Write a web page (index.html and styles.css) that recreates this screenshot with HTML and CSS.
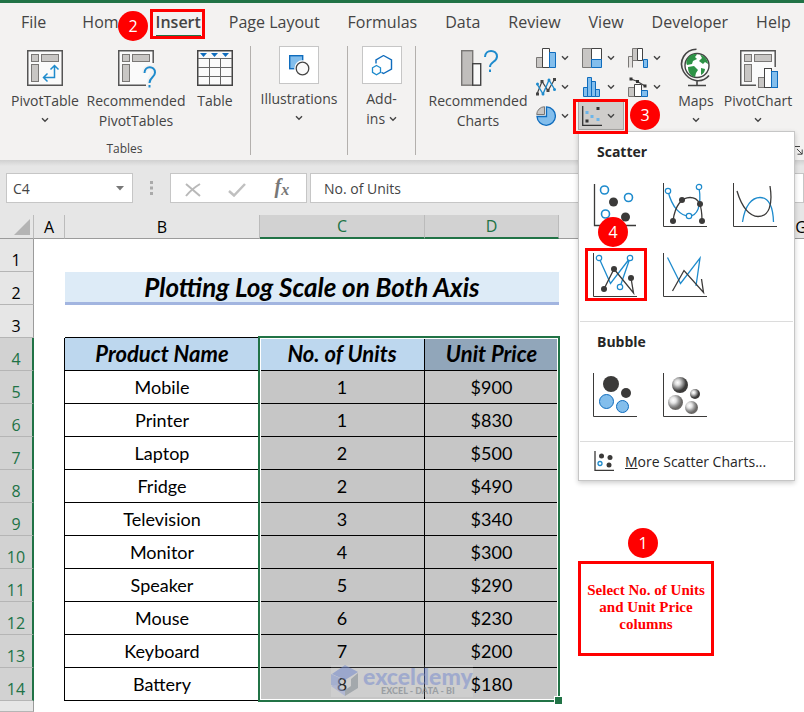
FILE: index.html
```html
<!DOCTYPE html>
<html lang="en">
<head>
    <meta charset="UTF-8">
    <title>Plotting Log Scale on Both Axis</title>
    <link rel="stylesheet" href="styles.css">
</head>
<body>
<svg class="defs" width="0" height="0">
    <symbol id="chevron" viewBox="0 0 8 6"><path d="M1 1.2 4 4.2 7 1.2" fill="none" stroke="#444" stroke-width="1.4"/></symbol>
    <symbol id="axis" viewBox="0 0 44 44"><path d="M.5 0V43.500H44" fill="none" stroke="#3b3a39"/></symbol>
</svg>
<div class="titlebar"></div>
<header class="ribbon">
    <nav class="tabs">
        <a href="#" class="file">File</a>
        <a href="#">Home</a>
        <a href="#" class="on">Insert</a>
        <a href="#">Page Layout</a>
        <a href="#">Formulas</a>
        <a href="#">Data</a>
        <a href="#">Review</a>
        <a href="#">View</a>
        <a href="#">Developer</a>
        <a href="#">Help</a>
    </nav>
    <div class="groups">
        <section class="group tables">
            <div class="tools">
                <button class="big pivot">
                    <svg width="36" height="36" viewBox="0 0 36 36">
                        <rect x=".75" y=".75" width="34.500" height="34.500" fill="#fafafa" stroke="#555" stroke-width="1.500"/>
                        <g fill="#c8c6c4" stroke="#797775"><rect x="4.500" y="4.500" width="7" height="7"/><rect x="14.500" y="4.500" width="17" height="7"/><rect x="4.500" y="14.500" width="7" height="17"/></g>
                        <path d="M16.500 27.500H27.500V15.500M20.500 23.500 16.500 27.500 20.500 31.500M23.500 19.500 27.500 15.500 31.500 19.500" fill="none" stroke="#1e8bcd" stroke-width="1.500"/>
                    </svg>
                    <span>PivotTable</span>
                    <svg class="chev"><use href="#chevron"/></svg>
                </button>
                <button class="big wide">
                    <svg width="36" height="36" viewBox="0 0 36 36" overflow="visible">
                        <path d="M35.200 13V.75H.75V35.250H28" fill="#fafafa" stroke="#555" stroke-width="1.500"/>
                        <g fill="#c8c6c4" stroke="#797775"><rect x="4.500" y="4.500" width="7" height="7"/><rect x="14.500" y="4.500" width="17" height="7"/><rect x="4.500" y="14.500" width="7" height="17"/></g>
                        <path d="M26.500 22.500C26.500 15.500 37 15.500 37 22.500C37 27.500 31.500 27 31.500 33M31.500 35V37.500" fill="none" stroke="#f3f2f1" stroke-width="5"/>
                        <path d="M26.500 23C26.500 15.500 37 15.500 37 22.500C37 27.500 31.500 27 31.500 33M31.500 35V37.500" fill="none" stroke="#1e8bcd" stroke-width="2"/>
                    </svg>
                    <span>Recommended<br>PivotTables</span>
                </button>
                <button class="big table-btn">
                    <svg width="36" height="36" viewBox="0 0 36 36">
                        <rect x=".75" y=".75" width="34.500" height="34.500" fill="#fafafa" stroke="#444" stroke-width="1.500"/>
                        <path d="M1 8.500H35M1 17.500H35M1 26.500H35M12.500 9V35M23.500 9V35" stroke="#666" fill="none"/>
                        <path d="M3 3H10L6.500 7ZM14 3H21L17.500 7ZM25 3H32L28.500 7Z" fill="#0f6cbd"/>
                    </svg>
                    <span>Table</span>
                </button>
            </div>
            <h2>Tables</h2>
        </section>
        <section class="group illus">
            <button class="big boxed">
                <i class="frame"><svg width="22" height="22" viewBox="0 0 22 22">
                    <rect x="1.700" y="1.700" width="13" height="13" fill="#83beec" stroke="#0f6cbd" stroke-width="1.400"/>
                    <circle cx="14.500" cy="14.500" r="8.200" fill="#fff"/>
                    <circle cx="14.500" cy="14.500" r="6.300" fill="#fafafa" stroke="#444" stroke-width="1.300"/>
                </svg></i>
                <span>Illustrations</span>
                <svg class="chev"><use href="#chevron"/></svg>
            </button>
        </section>
        <section class="group addins">
            <button class="big boxed">
                <i class="frame"><svg width="22" height="22" viewBox="0 0 22 22">
                    <path d="M12.500 1.500 20.500 6V15L12.500 19.500 10.500 18.400M5 9.500V6L12.500 1.500" fill="none" stroke="#0f6cbd" stroke-width="1.400"/>
                    <path d="M5.500 11.500 9.500 13.800V18.400L5.500 20.700 1.500 18.400V13.800Z" fill="#fff" stroke="#1e8bcd" stroke-width="1.300"/>
                </svg></i>
                <span>Add-<br>ins <svg class="chev inline"><use href="#chevron"/></svg></span>
            </button>
        </section>
        <section class="group charts">
            <button class="big wide">
                <svg width="36" height="36" viewBox="0 0 36 36" overflow="visible">
                    <rect x="1.700" y=".7" width="11" height="34.500" fill="#c0bebc" stroke="#797775" stroke-width="1.400"/>
                    <rect x="12.700" y="13.700" width="8" height="21.500" fill="#fafafa" stroke="#444" stroke-width="1.400"/>
                    <path d="M25 7C25-1 37-1 37 6.500C37 12 30 11.500 30 17M30 19.500V22" fill="none" stroke="#1e8bcd" stroke-width="2"/>
                </svg>
                <span>Recommended<br>Charts</span>
            </button>
            <div class="gallery">
                <button aria-label="Column">
                    <svg width="20" height="20" viewBox="0 0 20 20"><path d="M.5 9.500H6.500V19.500H.5Z" fill="#c8c6c4" stroke="#797775"/><path d="M6.500.5H13.500V19.500H6.500Z" fill="#fff" stroke="#444"/><path d="M13.500 4.500H19.500V19.500H13.500Z" fill="#83beec" stroke="#0f6cbd"/></svg>
                    <svg class="chev"><use href="#chevron"/></svg>
                </button>
                <button aria-label="Hierarchy">
                    <svg width="20" height="20" viewBox="0 0 20 20"><path d="M.5.5H9.500V19.500H.5Z" fill="#c8c6c4" stroke="#797775"/><path d="M9.500.5H19.500V11.500H9.500Z" fill="#fff" stroke="#444"/><path d="M9.500 11.500H19.500V19.500H9.500Z" fill="#83beec" stroke="#0f6cbd"/></svg>
                    <svg class="chev"><use href="#chevron"/></svg>
                </button>
                <button aria-label="Waterfall">
                    <svg width="20" height="20" viewBox="0 0 20 20"><path d="M.5 19.500V8.500H4.500V19.500" fill="#e1dfdd" stroke="#797775"/><path d="M4.500.5H9.500V12.500H4.500Z" fill="#c8c6c4" stroke="#797775"/><path d="M9.500.5H14.500V12.500H9.500Z" fill="#fff" stroke="#444"/><path d="M15.500 11.500H19.500V19.500H15.500Z" fill="#83beec" stroke="#0f6cbd"/></svg>
                    <svg class="chev"><use href="#chevron"/></svg>
                </button>
                <button aria-label="Line">
                    <svg width="20" height="20" viewBox="0 0 20 20"><path d="M1 17 6 4.500 12 13.500 18.500 2.500" fill="none" stroke="#444" stroke-width="1.200"/><path d="M1 7 7 17 13 3 19 13" fill="none" stroke="#1e8bcd" stroke-width="1.400"/><path d="M0 15.500H3V18.500H0ZM4.500 3H7.500V6H4.500ZM10.500 12H13.500V15H10.500ZM17 1H20V4H17Z" fill="#444"/><g fill="#1e8bcd"><circle cx="1.500" cy="7" r="1.500"/><circle cx="7" cy="17" r="1.500"/><circle cx="13" cy="3" r="1.500"/><circle cx="18.500" cy="12.500" r="1.500"/></g></svg>
                    <svg class="chev"><use href="#chevron"/></svg>
                </button>
                <button aria-label="Statistic">
                    <svg width="20" height="20" viewBox="0 0 20 20"><path d="M1.500 10.500H5.500V19.500H1.500ZM5.500.5H9.500V19.500H5.500ZM9.500 4.500H13.500V19.500H9.500ZM13.500 12.500H17.500V19.500H13.500Z" fill="#83beec" stroke="#0f6cbd"/></svg>
                    <svg class="chev"><use href="#chevron"/></svg>
                </button>
                <button aria-label="Combo">
                    <svg width="20" height="20" viewBox="0 0 20 20"><path d="M.5 10.500H6.500V19.500H.5Z" fill="#c8c6c4" stroke="#797775"/><path d="M6.500 7.500H13.500V19.500H6.500Z" fill="#fff" stroke="#444"/><path d="M13.500 13.500H19.500V19.500H13.500Z" fill="#83beec" stroke="#0f6cbd"/><path d="M3 2 9.500 4.500 17 9" fill="none" stroke="#444" stroke-width="1.200"/><path d="M1.500.5H4.500V3.500H1.500ZM8 3H11V6H8ZM15.500 7.500H18.500V10.500H15.500Z" fill="#333"/></svg>
                    <svg class="chev"><use href="#chevron"/></svg>
                </button>
                <button aria-label="Pie">
                    <svg width="20" height="20" viewBox="0 0 20 20"><path d="M10.500.9A9.200 9.200 0 1 1 1 10.500H10.500Z" fill="#83beec" stroke="#0f6cbd" stroke-width="1.300"/><path d="M8.500 8.500H.7A8 8 0 0 1 8.500.7Z" fill="#c8c6c4" stroke="#797775"/></svg>
                    <svg class="chev"><use href="#chevron"/></svg>
                </button>
                <button aria-label="Scatter" class="on">
                    <svg width="20" height="20" viewBox="0 0 20 20"><path d="M.7 0V19.300H20" fill="none" stroke="#333" stroke-width="1.300"/><path d="M14.500 1H17.500V4H14.500ZM3.500 13.500H6.500V16.500H3.500Z" fill="#333"/><path d="M3.500 5H6.500V8H3.500ZM8.500 9H11.500V12H8.500ZM14.500 12H17.500V15H14.500Z" fill="#6cb5ea"/></svg>
                    <svg class="chev"><use href="#chevron"/></svg>
                </button>
            </div>
            <button class="big maps">
                <svg width="32" height="38" viewBox="0 0 32 38" overflow="visible">
                    <circle cx="17" cy="15.500" r="12" fill="#fff" stroke="#444" stroke-width="1.400"/>
                    <path d="M8 8C11 4 15 3.500 17 4.500L15 7 17 9 13 11 12 14 7 15C5.500 13 6.500 10 8 8ZM20 4.500C25 6 28 10 28 14L25 12 23 14 19 11 22 8ZM8 17 14 16 18 20 16 23 15 27C10 26 8 22 8 17ZM21 18 25 19C25 22 23 24 21 25Z" fill="#2e9246"/>
                    <path d="M16.500-.8C5-.5-2 11 3.500 21.500C9 31.500 22 34 29 25.500M17 30V35.500M8 35.500H26" fill="none" stroke="#444" stroke-width="1.600"/>
                </svg>
                <span>Maps</span>
                <svg class="chev"><use href="#chevron"/></svg>
            </button>
            <button class="big pivotchart">
                <svg width="36" height="36" viewBox="0 0 36 36" overflow="visible">
                    <path d="M35.200 17V.75H.75V35.250H16" fill="#fafafa" stroke="#555" stroke-width="1.500"/>
                    <g fill="#c8c6c4" stroke="#797775"><rect x="4.500" y="4.500" width="7" height="7"/><rect x="14.500" y="4.500" width="17" height="7"/><rect x="4.500" y="14.500" width="7" height="17"/><rect x="18.500" y="27.500" width="9" height="10"/></g>
                    <rect x="24.500" y="18.500" width="7" height="19" fill="#fff" stroke="#444"/>
                    <rect x="31.500" y="21.500" width="6" height="16" fill="#83beec" stroke="#0f6cbd"/>
                </svg>
                <span>PivotChart</span>
                <svg class="chev"><use href="#chevron"/></svg>
            </button>
            <button class="launcher" aria-label="Chart options"><svg width="9" height="9" viewBox="0 0 9 9"><path d="M.5 5V.5H6M3 3 8 8M8.200 3.500V8.200H3.500" fill="none" stroke="#444"/></svg></button>
        </section>
    </div>
</header>

<div class="formulabar">
    <div class="namebox">
        <input type="text" value="C4" aria-label="Name box">
        <svg width="8" height="5" viewBox="0 0 8 5"><path d="M0 0H8L4 4.500Z" fill="#777"/></svg>
    </div>
    <svg class="grip" width="3" height="14" viewBox="0 0 3 14"><path d="M0 0H3V3H0ZM0 5.500H3V8.500H0ZM0 11H3V14H0Z" fill="#aaa"/></svg>
    <div class="fxbox">
        <button aria-label="Cancel"><svg width="16" height="14" viewBox="0 0 16 14"><path d="M1 1 15 13M15 1C10 4 5 8 1 13" fill="none" stroke="#b9b9b9" stroke-width="2"/></svg></button>
        <button aria-label="Enter"><svg width="18" height="14" viewBox="0 0 18 14"><path d="M1 8 6 12.500 17 1" fill="none" stroke="#c0c0c0" stroke-width="2.500"/></svg></button>
        <button class="fx" aria-label="Insert function">f<sub>x</sub></button>
    </div>
    <input type="text" class="formula" value="No. of Units" aria-label="Formula">
</div>

<main class="sheet">
    <table>
        <colgroup>
            <col class="c-row"><col class="c-a"><col class="c-b"><col class="c-c"><col class="c-d"><col class="c-e"><col class="c-e"><col class="c-g">
        </colgroup>
        <thead>
            <tr><th class="corner"><svg width="16" height="16" viewBox="0 0 16 16"><path d="M16 0V16H0Z" fill="#b4b4b4"/></svg></th><th>A</th><th>B</th><th class="sel">C</th><th class="sel">D</th><th>E</th><th>F</th><th>G</th></tr>
        </thead>
        <tbody>
            <tr><th>1</th><td></td><td></td><td></td><td></td></tr>
            <tr><th>2</th><td></td><td colspan="3" class="banner">Plotting Log Scale on Both Axis</td></tr>
            <tr class="above"><th>3</th><td></td><td></td><td></td><td></td></tr>
            <tr class="data head"><th>4</th><td></td><td>Product Name</td><td>No. of Units</td><td>Unit Price</td></tr>
            <tr class="data"><th>5</th><td></td><td>Mobile</td><td>1</td><td>$900</td></tr>
            <tr class="data"><th>6</th><td></td><td>Printer</td><td>1</td><td>$830</td></tr>
            <tr class="data"><th>7</th><td></td><td>Laptop</td><td>2</td><td>$500</td></tr>
            <tr class="data"><th>8</th><td></td><td>Fridge</td><td>2</td><td>$490</td></tr>
            <tr class="data"><th>9</th><td></td><td>Television</td><td>3</td><td>$340</td></tr>
            <tr class="data"><th>10</th><td></td><td>Monitor</td><td>4</td><td>$300</td></tr>
            <tr class="data"><th>11</th><td></td><td>Speaker</td><td>5</td><td>$290</td></tr>
            <tr class="data"><th>12</th><td></td><td>Mouse</td><td>6</td><td>$230</td></tr>
            <tr class="data"><th>13</th><td></td><td>Keyboard</td><td>7</td><td>$200</td></tr>
            <tr class="data"><th>14</th><td></td><td>Battery</td><td>8</td><td>$180</td></tr>
            <tr class="last"><th></th><td></td><td></td><td></td><td></td></tr>
        </tbody>
    </table>
    <div class="watermark">
        <svg width="28" height="32" viewBox="0 0 28 32"><path d="M14 0 27 7 14 15 1 9Z" fill="#7f93d0"/><path d="M0 9 9 13V24L0 20Z" fill="#8fa0d6"/><path d="M27 8V23L14 31V25L20 21V14Z" fill="#8c959c"/><path d="M0 21 14 31V26L5 20Z" fill="#a5b0dc"/></svg>
        <p>exceldemy<small>EXCEL - DATA - BI</small></p>
    </div>
    <div class="selection"></div>
</main>

<div class="menu">
    <h3>Scatter</h3>
    <div class="options">
        <button aria-label="Scatter">
            <svg width="44" height="44" viewBox="0 0 44 44"><path d="M1.500 1V42.500H43" fill="none" stroke="#3b3a39" stroke-width="1.300"/><g fill="#fff" stroke="#1e8bcd" stroke-width="1.600"><circle cx="11.500" cy="7" r="4"/><circle cx="35.500" cy="14.500" r="4"/><circle cx="12.500" cy="31" r="4"/></g><g fill="#3b3a39"><circle cx="20.500" cy="19" r="4.500"/><circle cx="32.500" cy="34" r="4.500"/></g></svg>
        </button>
        <button aria-label="Smooth lines and markers">
            <svg width="44" height="44" viewBox="0 0 44 44"><use href="#axis"/><path d="M5 8C9 25 18 33 26 33C34 33 39 24 36 4" fill="none" stroke="#1e8bcd" stroke-width="1.300"/><path d="M10 38C12 22 19 14.500 27 14.500C36 14.500 39 22 39 38" fill="none" stroke="#3b3a39" stroke-width="1.300"/><g fill="#fff" stroke="#1e8bcd" stroke-width="1.200"><circle cx="5" cy="8" r="2.700"/><circle cx="36" cy="4" r="2.700"/><circle cx="26" cy="33" r="2.700"/></g><g fill="#3b3a39"><circle cx="10" cy="38" r="3"/><circle cx="19" cy="17" r="3"/><circle cx="37" cy="21" r="3"/><circle cx="39" cy="38" r="3"/></g></svg>
        </button>
        <button aria-label="Smooth lines">
            <svg width="44" height="44" viewBox="0 0 44 44"><use href="#axis"/><path d="M9.500 39C12 22 19 14.500 27 14.500C36 14.500 40 23 40.500 39" fill="none" stroke="#1e8bcd" stroke-width="1.300"/><path d="M4 8C9 25 17 33.500 25 33.500C36 33.500 40 22 37 3" fill="none" stroke="#3b3a39" stroke-width="1.300"/></svg>
        </button>
        <button aria-label="Straight lines and markers">
            <svg width="44" height="44" viewBox="0 0 44 44"><use href="#axis"/><path d="M6 5 17.500 30.500 37 5 27 34" fill="none" stroke="#1e8bcd" stroke-width="1.300"/><path d="M11 36 21 16 40.500 40 38 25" fill="none" stroke="#3b3a39" stroke-width="1.300"/><g fill="#fff" stroke="#1e8bcd" stroke-width="1.200"><circle cx="6" cy="5" r="2.700"/><circle cx="37" cy="5" r="2.700"/><circle cx="27" cy="34" r="2.700"/></g><g fill="#3b3a39"><circle cx="11" cy="36" r="3"/><circle cx="21" cy="16" r="3"/><circle cx="38" cy="25" r="3"/></g></svg>
        </button>
        <button aria-label="Straight lines">
            <svg width="44" height="44" viewBox="0 0 44 44"><use href="#axis"/><path d="M4.500 4.500 17.500 30.500 37 5 33 33" fill="none" stroke="#1e8bcd" stroke-width="1.300"/><path d="M9.500 38 21 17.500 40.500 39.500 38.500 26" fill="none" stroke="#3b3a39" stroke-width="1.300"/></svg>
        </button>
    </div>
    <h3 class="line">Bubble</h3>
    <div class="options">
        <button aria-label="Bubble">
            <svg width="44" height="44" viewBox="0 0 44 44"><use href="#axis"/><g fill="#3b3a39"><circle cx="18" cy="11" r="8"/><circle cx="33" cy="20" r="5"/></g><g fill="#83beec" stroke="#0f6cbd"><circle cx="13.500" cy="28.500" r="7"/><circle cx="29.500" cy="33.500" r="6"/></g></svg>
        </button>
        <button aria-label="3-D Bubble">
            <svg width="44" height="44" viewBox="0 0 44 44">
                <defs>
                    <radialGradient id="dark" cx=".35" cy=".35" r=".65"><stop offset="0" stop-color="#fff"/><stop offset=".25" stop-color="#ddd"/><stop offset=".6" stop-color="#777"/><stop offset=".8" stop-color="#3b3a39"/></radialGradient>
                    <radialGradient id="gray" cx=".35" cy=".35" r=".65"><stop offset="0" stop-color="#fff"/><stop offset=".3" stop-color="#e5e5e5"/><stop offset=".6" stop-color="#999"/><stop offset=".85" stop-color="#6b6967"/></radialGradient>
                </defs>
                <use href="#axis"/><g fill="url(#dark)"><circle cx="17" cy="12" r="8"/><circle cx="32" cy="21" r="5"/></g><g fill="url(#gray)"><circle cx="12.500" cy="29.500" r="7.500"/><circle cx="28.500" cy="34.500" r="6.500"/></g>
            </svg>
        </button>
    </div>
    <a href="#" class="more line">
        <svg width="20" height="20" viewBox="0 0 20 20"><path d="M1 0V19.300H20" fill="none" stroke="#3b3a39" stroke-width="1.300"/><g fill="#3b3a39"><circle cx="7.500" cy="5" r="2.500"/><circle cx="16" cy="6.500" r="2.500"/><circle cx="15" cy="14" r="2.500"/></g><circle cx="6" cy="12.500" r="2" fill="#fff" stroke="#1e8bcd" stroke-width="1.300"/></svg>
        <span><u>M</u>ore Scatter Charts...</span>
    </a>
</div>

<div class="mark m-insert"></div>
<div class="mark m-scatter"></div>
<div class="mark m-option"></div>
<div class="mark m-note">Select No. of Units and Unit Price columns</div>
<b class="step s1">1</b>
<b class="step s2">2</b>
<b class="step s3">3</b>
<b class="step s4">4</b>
</body>
</html>
```
FILE: styles.css
```css
*
{
    margin: 0;
    padding: 0;
    box-sizing: border-box;
}
body
{
    position: relative;
    min-height: 100vh;
    overflow: hidden;
    background: #fff;
    font-family: "Open Sans", "Noto Sans", sans-serif;
    font-size: 14px;
    color: #444;
}
button
{
    border: 0;
    background: none;
    font: inherit;
    color: inherit;
}
a
{
    color: inherit;
    text-decoration: none;
}
svg
{
    flex: none;
}
.defs
{
    position: absolute;
}
.titlebar
{
    height: 3px;
    background: #217346;
}

/* ribbon */
.ribbon
{
    height: 157px;
    background: #f3f2f1;
}
.tabs
{
    display: flex;
    gap: 28px;
    height: 43px;
    padding: 7px 0 0 21px;
    font-size: 16px;
    line-height: 24px;
    white-space: nowrap;
}
.tabs .file
{
    margin-right: 8px;
}
.tabs .on
{
    height: 27px;
    font-weight: 600;
    border-bottom: 2px solid #217346;
}
.groups
{
    display: flex;
    height: 109px;
}
.group
{
    position: relative;
    flex: none;
    border-right: 1px solid #b3b0ad;
}
.group h2
{
    margin-top: 10px;
    font-size: 12px;
    font-weight: normal;
    line-height: 16px;
    text-align: center;
}
.tables
{
    width: 251px;
    padding: 0 9px 0 8px;
}
.tools
{
    display: flex;
    gap: 4px;
}
.big
{
    display: flex;
    flex-direction: column;
    align-items: center;
    padding-top: 4px;
    line-height: 20px;
    white-space: nowrap;
}
.big span
{
    margin-top: 5px;
}
.big .chev
{
    margin-top: 6px;
}
.big .inline
{
    vertical-align: 2px;
}
.boxed
{
    width: 100%;
    padding-top: 0;
}
.frame
{
    display: flex;
    align-items: center;
    justify-content: center;
    width: 40px;
    height: 38px;
    border: 1px solid #c6c6c6;
    background: #fff;
}
.chev
{
    width: 8px;
    height: 6px;
}
.pivot
{
    width: 74px;
}
.wide
{
    width: 100px;
}
.table-btn
{
    width: 50px;
}
.illus
{
    width: 97px;
}
.addins
{
    width: 68px;
}
.charts
{
    display: flex;
    flex: 1;
    align-items: flex-start;
    padding-left: 12px;
    border: 0;
}
.gallery
{
    display: grid;
    grid-template-columns: repeat(3, 46px);
    grid-auto-rows: 29px;
    margin: -3px 0 0 4px;
}
.gallery button
{
    display: flex;
    align-items: center;
    gap: 5px;
    padding-left: 4px;
}
.gallery .on
{
    background: #cfcdcb;
    border: 1px solid #a6a4a2;
    padding-left: 3px;
}
.maps
{
    width: 52px;
}
.maps span
{
    margin-top: 3px;
}
.pivotchart
{
    width: 72px;
}
.launcher
{
    align-self: flex-end;
    flex: none;
    line-height: 0;
}

/* formula bar */
.formulabar
{
    display: flex;
    align-items: flex-start;
    height: 55px;
    padding: 13px 0 0 6px;
    background: linear-gradient(#d0d0d0, #e6e6e6 6px);
}
.formulabar input
{
    min-width: 0;
    border: 0;
    outline: 0;
    background: none;
    font: inherit;
    color: #444;
}
.namebox, .fxbox, .formulabar .formula
{
    height: 30px;
    border: 1px solid #c6c6c6;
    background: #fff;
}
.namebox
{
    display: flex;
    align-items: center;
    width: 127px;
    padding: 0 8px 0 6px;
}
.namebox input
{
    flex: 1;
}
.grip
{
    margin: 8px 17px 0;
}
.fxbox
{
    display: flex;
    width: 137px;
    margin-right: 3px;
    padding-right: 2px;
}
.fxbox button
{
    flex: 1;
}
.fxbox svg
{
    vertical-align: middle;
}
.fx
{
    font: italic bold 20px/24px "Liberation Serif", serif;
    color: #777;
}
.fx sub
{
    font-size: 16px;
    vertical-align: -2px;
}
.formulabar .formula
{
    flex: 1;
    padding-left: 13px;
    background: #fff;
}

/* sheet */
.sheet
{
    position: relative;
    overflow: hidden;
    font-family: Lato, Carlito, sans-serif;
}
table
{
    width: 832px;
    table-layout: fixed;
    border-collapse: separate;
    border-spacing: 0;
    color: #000;
}
.c-row { width: 34px; }
.c-a { width: 31px; }
.c-b { width: 195px; }
.c-c { width: 165px; }
.c-d { width: 134px; }
.c-e { width: 106px; }
.c-g { width: 61px; }
th
{
    background: #e6e6e6;
    font-family: "Open Sans", "Noto Sans", sans-serif;
    font-size: 16px;
    font-weight: normal;
}
thead th
{
    height: 24px;
    border-right: 1px solid #bbb;
    border-bottom: 1px solid #9b9b9b;
    line-height: 20px;
}
thead .sel
{
    background: #d2d2d2;
    border-bottom: 2px solid #217346;
    color: #217346;
}
.corner
{
    padding-right: 3px;
    text-align: right;
    line-height: 0;
}
tbody tr
{
    height: 33px;
}
tbody th
{
    padding-right: 1px;
    border-right: 1px solid #9b9b9b;
    border-bottom: 1px solid #b5b5b5;
    line-height: 22px;
    vertical-align: bottom;
}
td
{
    font-size: 18px;
    line-height: 22px;
    text-align: center;
}
.banner
{
    background: #ddebf7;
    border-bottom: 3px solid #a2b5e0;
    font-size: 26px;
    font-weight: bold;
    font-style: italic;
}
.above td:nth-child(n+3)
{
    border-bottom: 1px solid #000;
}
.data th
{
    background: #d2d2d2;
    border-right: 2px solid #217346;
    padding-right: 0;
    color: #217346;
}
.data td:nth-child(n+3)
{
    border-right: 1px solid #000;
    border-bottom: 1px solid #000;
}
.data td:nth-child(2)
{
    border-right: 1px solid #000;
}
.data td:nth-child(n+4)
{
    background: #c6c6c6;
}
.data.head td:nth-child(n+3)
{
    background: #bdd7ee;
    font-size: 22px;
    font-weight: bold;
    font-style: italic;
}
.data.head td:nth-child(5)
{
    background: #91a6ba;
}
tbody .last
{
    height: 11px;
}
.selection
{
    position: absolute;
    left: 258px;
    top: 121px;
    width: 302px;
    height: 366px;
    border: 2px solid #217346;
    box-shadow: inset 0 0 0 1px #fff;
}
.selection::after
{
    content: "";
    position: absolute;
    right: -5px;
    bottom: -5px;
    width: 7px;
    height: 7px;
    border: 1px solid #fff;
    background: #217346;
}
.watermark
{
    position: absolute;
    left: 331px;
    top: 450px;
    display: flex;
    gap: 4px;
    width: 142px;
    height: 32px;
    background: rgba(255, 255, 255, .25);
    opacity: .6;
    white-space: nowrap;
}
.watermark p
{
    font-size: 23px;
    font-weight: 900;
    line-height: 22px;
    color: #8899d2;
}
.watermark small
{
    display: block;
    font-size: 9px;
    line-height: 8px;
    text-align: center;
    color: #7d858c;
}

/* scatter menu */
.menu
{
    position: absolute;
    left: 578px;
    top: 131px;
    width: 217px;
    border: 1px solid #c6c6c6;
    background: #fff;
    box-shadow: 0 2px 5px rgba(0, 0, 0, .2);
    color: #262626;
}
.menu h3
{
    padding: 10px 18px;
    font-size: 14px;
    line-height: 20px;
}
.menu .line
{
    margin: 0 1px;
    border-top: 1px solid #dcdcdc;
}
.menu h3.line
{
    padding: 10px 17px;
}
.options
{
    display: grid;
    grid-template-columns: repeat(3, 44px);
    gap: 26px;
    padding: 11px 14px 24px;
}
.options svg
{
    display: block;
}
.more
{
    display: flex;
    align-items: center;
    gap: 11px;
    height: 39px;
    padding-left: 14px;
}

/* steps */
.mark
{
    position: absolute;
    border: 3px solid #f00;
}
.m-insert
{
    left: 150px;
    top: 9px;
    width: 55px;
    height: 30px;
}
.m-scatter
{
    left: 573px;
    top: 99px;
    width: 55px;
    height: 35px;
}
.m-option
{
    left: 585px;
    top: 248px;
    width: 62px;
    height: 53px;
}
.m-note
{
    left: 578px;
    top: 561px;
    width: 136px;
    height: 95px;
    padding-top: 18px;
    font: bold 15px/17px "Liberation Serif", serif;
    text-align: center;
    color: #f00;
}
.step
{
    position: absolute;
    width: 30px;
    height: 30px;
    border-radius: 50%;
    background: #f00;
    color: #fff;
    font-size: 16px;
    font-weight: normal;
    line-height: 30px;
    text-align: center;
}
.s1 { left: 628px; top: 528px; }
.s2 { left: 118px; top: 11px; }
.s3 { left: 630px; top: 100px; }
.s4 { left: 598px; top: 217px; }
```
